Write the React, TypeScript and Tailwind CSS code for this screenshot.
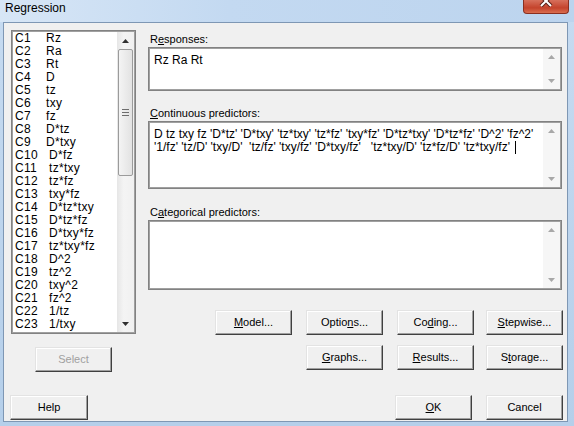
const columns = [
  'Rz', 'Ra', 'Rt', 'D', 'tz', 'txy', 'fz', 'D*tz', 'D*txy', 'D*fz', 'tz*txy', 'tz*fz',
  'txy*fz', 'D*tz*txy', 'D*tz*fz', 'D*txy*fz', 'tz*txy*fz', 'D^2', 'tz^2', 'txy^2', 'fz^2',
  '1/tz', '1/txy',
]

function Arrow({ up, color }: { up?: boolean; color: string }) {
  return (
    <svg width="7" height="4" viewBox="0 0 7 4">
      <path d={up ? 'M0 4 L3.5 0 L7 4 Z' : 'M0 0 L3.5 4 L7 0 Z'} fill={color} />
    </svg>
  )
}

function Btn({
  children,
  disabled,
  className = '',
}: {
  children: React.ReactNode
  disabled?: boolean
  className?: string
}) {
  return (
    <button
      disabled={disabled}
      className={`flex h-[25px] w-[77px] items-center justify-center border border-t-[#e3e3e3] border-l-[#e3e3e3] border-r-[#404040] border-b-[#404040] bg-[#f0f0f0] text-[11px] shadow-[inset_-1px_-1px_0_#a0a0a0,inset_1px_1px_0_#ffffff] ${
        disabled ? 'text-[#a0a0a0]' : 'text-black'
      } ${className}`}
    >
      {children}
    </button>
  )
}

function Field({ height, children }: { height: string; children?: React.ReactNode }) {
  return (
    <div
      className={`flex w-[414px] border border-[#828282] bg-white shadow-[inset_1px_1px_0_#a0a0a0,inset_-1px_-1px_0_#a0a0a0] p-px ${height}`}
    >
      <div className="flex-1 overflow-hidden whitespace-pre px-[4px] pt-[3px] text-[12px] leading-[12px] text-black">
        {children}
      </div>
      <div className="flex w-[17px] flex-col items-center justify-between bg-[#f6f6f6] py-[6px]">
        <Arrow up color="#a8a8a8" />
        <Arrow color="#a8a8a8" />
      </div>
    </div>
  )
}

function Label({ children, className = '' }: { children: React.ReactNode; className?: string }) {
  return <div className={`pl-[2px] text-[11px] leading-[13px] ${className}`}>{children}</div>
}

function ColumnList() {
  return (
    <div className="flex h-[304px] w-[125px] border border-[#828282] bg-white p-px shadow-[inset_1px_1px_0_#a0a0a0,inset_-1px_-1px_0_#a0a0a0]">
      <div className="flex-1 pl-[2px] text-[12px] tracking-[0.3px]">
        {columns.map((name, i) => (
          <div key={name} className="flex h-[13px] items-center leading-[13px]">
            <span className={i < 9 ? 'w-[31px]' : 'w-[34px]'}>C{i + 1}</span>
            <span>{name}</span>
          </div>
        ))}
      </div>
      <div className="flex w-[17px] flex-col bg-[linear-gradient(to_right,#e6e6e6,#f4f4f4_40%,#f0f0f0)]">
        <div className="flex h-[17px] items-center justify-center">
          <Arrow up color="#303030" />
        </div>
        <div className="mx-px flex h-[127px] flex-col items-center justify-center gap-[2px] rounded-[2px] border border-[#9b9b9b] bg-[linear-gradient(to_right,#f4f4f4,#e2e2e2)]">
          <div className="h-px w-[7px] bg-[#6d6d6d]" />
          <div className="h-px w-[7px] bg-[#6d6d6d]" />
          <div className="h-px w-[7px] bg-[#6d6d6d]" />
        </div>
        <div className="flex-1" />
        <div className="flex h-[17px] items-center justify-center">
          <Arrow color="#303030" />
        </div>
      </div>
    </div>
  )
}

export default function App() {
  return (
    <div className="flex h-[426px] w-[574px] flex-col overflow-hidden bg-[linear-gradient(to_bottom,#c6dbf1,#b5cfea)] font-['Liberation_Sans',Arial,sans-serif] text-black">
      <div className="flex h-[22px] shrink-0 items-start justify-between bg-[linear-gradient(to_right,#d7e6f6,#c3d9f1_40%,#bcd4ee)]">
        <div className="pl-[5px] pt-px text-[12px] leading-[15px]">Regression</div>
        <div className="mr-[5px] flex h-[14px] w-[46px] items-start justify-center rounded-b-[4px] border border-t-0 border-[#8a2f20] bg-[linear-gradient(to_bottom,#d7705c,#c4432c_60%,#d96d4f)]">
          <svg width="14" height="7" viewBox="0 0 14 7">
            <path d="M2 -4 L12 6 M12 -4 L2 6" stroke="#5a2018" strokeWidth="4" />
            <path d="M2 -4 L12 6 M12 -4 L2 6" stroke="#ffffff" strokeWidth="2" />
          </svg>
        </div>
      </div>
      <div className="ml-[3px] h-[400px] w-[565px] border border-[#7e97b4] bg-[#f0f0f0] text-[11px]">
        <div className="flex pt-[7px]">
          <div className="ml-[7px] flex flex-col">
            <ColumnList />
            <Btn disabled className="ml-[24px] mt-[13px]">
              Select
            </Btn>
          </div>
          <div className="ml-[12px] flex flex-col pt-[3px]">
            <Label className="mb-px">
              R<u>e</u>sponses:
            </Label>
            <Field height="h-[44px]">
              <div className="pt-[2px]">Rz Ra Rt</div>
            </Field>
            <Label className="mb-px mt-[16px]">
              <u>C</u>ontinuous predictors:
            </Label>
            <Field height="h-[68px]">
              <div className="pt-[2px]">
                {"D tz txy fz 'D*tz' 'D*txy' 'tz*txy' 'tz*fz' 'txy*fz' 'D*tz*txy' 'D*tz*fz' 'D^2' 'fz^2'"}
              </div>
              <div className="flex pt-px">
                {"'1/fz' 'tz/D' 'txy/D'  'tz/fz' 'txy/fz' 'D*txy/fz'   'tz*txy/D' 'tz*fz/D' 'tz*txy/fz' "}
                <span className="ml-[2px] h-[13px] w-px bg-black" />
              </div>
            </Field>
            <Label className="mb-px mt-[17px]">
              C<u>a</u>tegorical predictors:
            </Label>
            <Field height="h-[70px]" />
            <div className="mt-[20px] flex">
              <Btn className="ml-[67px]">
                <u>M</u>odel...
              </Btn>
              <Btn className="ml-[14px]">
                Optio<u>n</u>s...
              </Btn>
              <Btn className="ml-[14px]">
                Co<u>d</u>ing...
              </Btn>
              <Btn className="ml-[12px]">
                <u>S</u>tepwise...
              </Btn>
            </div>
            <div className="mt-[10px] flex">
              <Btn className="ml-[158px]">
                <u>G</u>raphs...
              </Btn>
              <Btn className="ml-[14px]">
                <u>R</u>esults...
              </Btn>
              <Btn className="ml-[12px]">
                S<u>t</u>orage...
              </Btn>
            </div>
          </div>
        </div>
        <div className="mt-[23px] flex">
          <Btn className="ml-[6px] w-[78px]">Help</Btn>
          <Btn className="ml-[307px]">
            <u>O</u>K
          </Btn>
          <Btn className="ml-[14px]">Cancel</Btn>
        </div>
      </div>
    </div>
  )
}
